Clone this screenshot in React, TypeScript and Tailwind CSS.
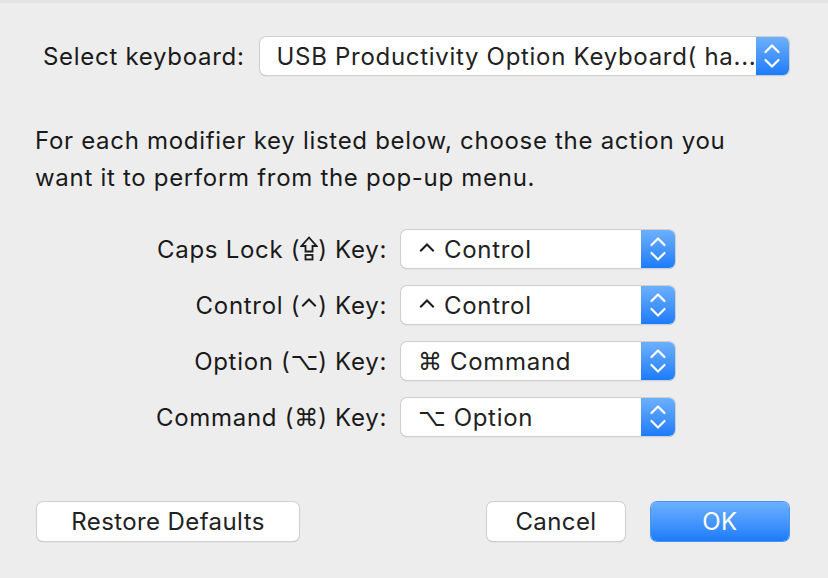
import React from 'react';

const font = { fontFamily: 'Inter, "DejaVu Sans", sans-serif' };

const Chevrons: React.FC = () => (
  <svg width="16" height="26" viewBox="0 0 16 26" fill="none">
    <path d="M1.5 9 L8 2.5 L14.5 9" stroke="white" strokeWidth="2.2" strokeLinecap="round" strokeLinejoin="round" />
    <path d="M1.5 17 L8 23.5 L14.5 17" stroke="white" strokeWidth="2.2" strokeLinecap="round" strokeLinejoin="round" />
  </svg>
);

const Caret: React.FC = () => (
  <svg width="18" height="18" viewBox="0 0 18 18" fill="none" className="inline-block align-baseline">
    <path d="M3 9.5 L9 3.5 L15 9.5" stroke="#1a1a1a" strokeWidth="2" strokeLinecap="square" />
  </svg>
);

const CapsLock: React.FC = () => (
  <svg width="18" height="26" viewBox="0 0 18 26" fill="none" className="inline-block -mb-[4px] align-baseline">
    <path d="M9 1.5 L16.5 10 L12.5 10 L12.5 15.5 L5.5 15.5 L5.5 10 L1.5 10 Z" stroke="#1a1a1a" strokeWidth="1.8" strokeLinejoin="miter" />
    <rect x="5.5" y="19" width="7" height="4.5" stroke="#1a1a1a" strokeWidth="1.8" />
  </svg>
);

// modifier glyphs: caret and caps lock drawn, others from DejaVu which has the Mac key symbols
const Sym: React.FC<{ c: string }> = ({ c }) => {
  if (c === '⌃') return <Caret />;
  if (c === '⇪') return <CapsLock />;
  return <span className="tracking-normal" style={{ fontFamily: '"DejaVu Sans", sans-serif' }}>{c}</span>;
};

const PopUp: React.FC<{ sym?: string; label: string; width: string; arrow: string }> = ({ sym, label, width, arrow }) => (
  <div
    className={`flex h-[38px] ${width} items-stretch overflow-hidden rounded-[6px] bg-white shadow-[0_0_0_1px_#cfcfcf,0_1px_1px_#a9a9a9]`}
  >
    <div className="flex flex-1 items-center gap-[8px] pl-[17px] pt-[2px] text-[24px] tracking-[0.7px] text-[#222] whitespace-nowrap">
      {sym && <Sym c={sym} />}
      <span>{label}</span>
    </div>
    <div className={`flex ${arrow} items-center justify-center bg-gradient-to-b from-[#6cb0fc] to-[#1a7bfb]`}>
      <Chevrons />
    </div>
  </div>
);

const Button: React.FC<{ label: string; width: string; primary?: boolean }> = ({ label, width, primary }) =>
  primary ? (
    <div className={`flex h-[39px] ${width} items-center justify-center rounded-[6px] bg-gradient-to-b from-[#6cb0fc] to-[#1a7bfb] pt-[1px] text-[24px] tracking-[0.4px] text-white shadow-[0_0_0_1px_#4a94f4]`}>
      {label}
    </div>
  ) : (
    <div className={`flex h-[39px] ${width} items-center justify-center rounded-[6px] bg-white pt-[1px] text-[24px] tracking-[0.4px] text-[#222] shadow-[0_0_0_1px_#cfcfcf,0_1px_1px_#a9a9a9]`}>
      {label}
    </div>
  );

const rows = [
  { name: 'Caps Lock', key: '⇪', sym: '⌃', value: 'Control' },
  { name: 'Control', key: '⌃', sym: '⌃', value: 'Control' },
  { name: 'Option', key: '⌥', sym: '⌘', value: 'Command' },
  { name: 'Command', key: '⌘', sym: '⌥', value: 'Option' },
];

export default function App() {
  return (
    <div className="h-[578px] w-[828px] border-t-[3px] border-[#e4e4e4] bg-[#ededed] text-[24px] tracking-[0.7px] text-[#1a1a1a]" style={font}>
      {/* keyboard picker */}
      <div className="ml-[43px] mt-[34px] flex items-center gap-[15px]">
        <span className="pt-[2px]">Select keyboard:</span>
        <PopUp label="USB Productivity Option Keyboard( ha..." width="w-[529px]" arrow="w-[37px]" />
      </div>

      <p className="ml-[35px] mt-[47px] leading-[37px]">
        For each modifier key listed below, choose the action you
        <br />
        want it to perform from the pop-up menu.
      </p>

      <div className="mt-[34px] flex flex-col gap-[18px]">
        {rows.map((r) => (
          <div key={r.name} className="flex items-center">
            <span className="w-[387px] pt-[2px] text-right">
              {r.name} (<Sym c={r.key} />) Key:
            </span>
            <div className="ml-[14px]">
              <PopUp sym={r.sym} label={r.value} width="w-[274px]" arrow="w-[34px]" />
            </div>
          </div>
        ))}
      </div>

      <div className="mx-[39px] ml-[37px] mt-[66px] flex items-center">
        <Button label="Restore Defaults" width="w-[262px]" />
        <div className="flex-1" />
        <Button label="Cancel" width="w-[138px]" />
        <div className="ml-[26px]">
          <Button label="OK" width="w-[138px]" primary />
        </div>
      </div>
    </div>
  );
}
